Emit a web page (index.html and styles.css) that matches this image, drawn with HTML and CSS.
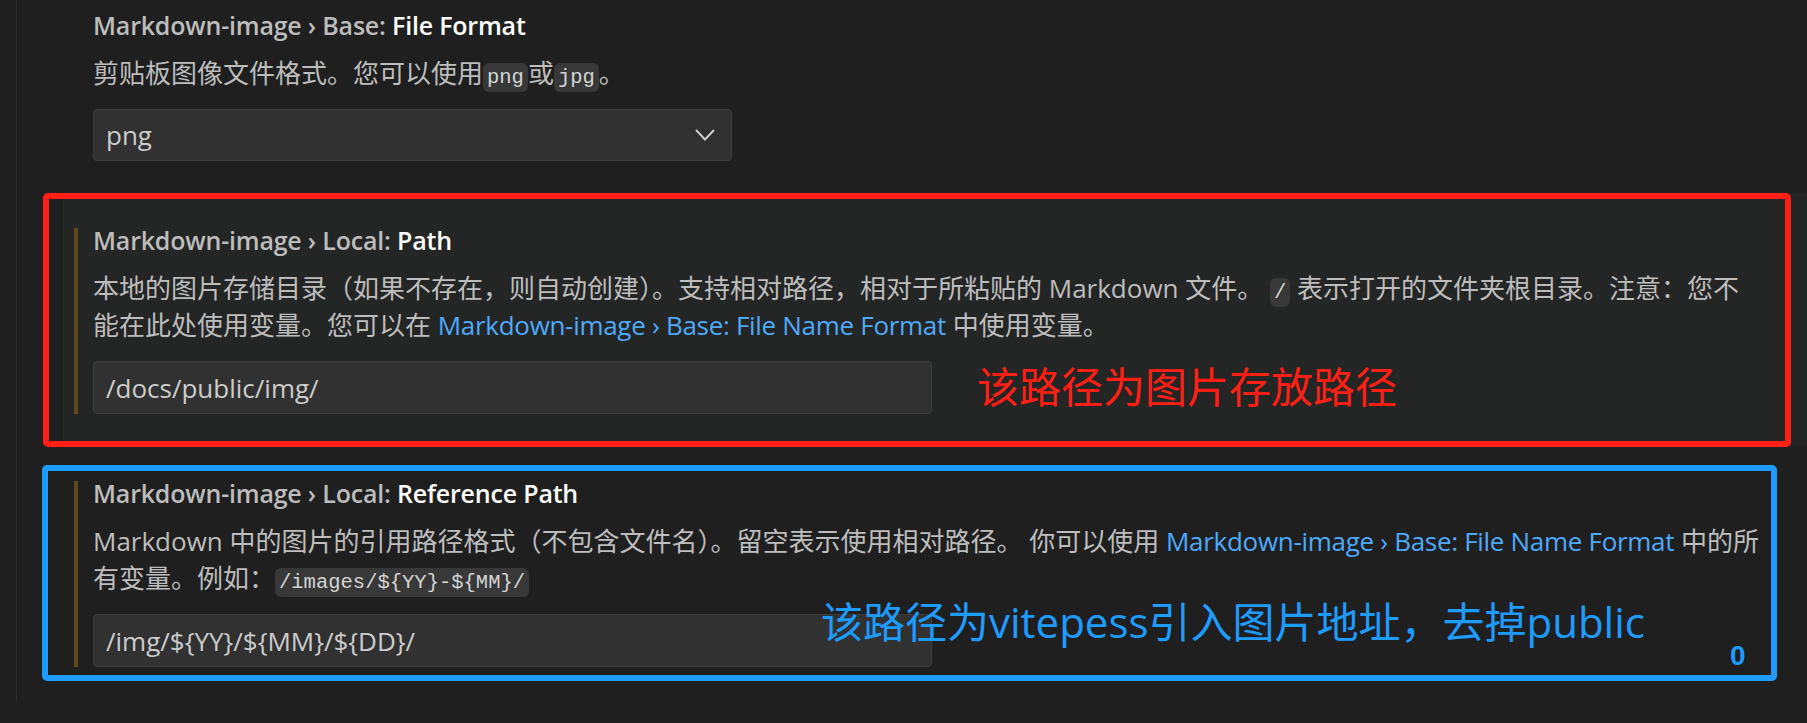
FILE: index.html
```html
<!DOCTYPE html>
<html lang="zh-CN">
<head>
<meta charset="utf-8">
<title>Settings</title>
<link rel="stylesheet" href="styles.css">
</head>
<body>
<div class="editor">
  <div class="list">
    <div class="item">
      <div class="body">
        <div class="title"><span class="cat">Markdown-image › Base: </span><span class="label">File Format</span></div>
        <div class="desc">
          <span class="ln">剪贴板图像文件格式。您可以使用<code>png</code>或<code>jpg</code>。</span>
        </div>
        <div class="select"><span>png</span><svg class="chev" width="20" height="12" viewBox="0 0 20 12"><path d="M1 1 L10 10.5 L19 1" fill="none" stroke="#cccccc" stroke-width="2"/></svg></div>
      </div>
    </div>

    <div class="item focused">
      <div class="body modified">
        <div class="title"><span class="cat">Markdown-image › Local: </span><span class="label">Path</span></div>
        <div class="desc">
          <span class="ln">本地的图片存储目录（如果不存在，则自动创建）。支持相对路径，相对于所粘贴的 Markdown 文件。 <code>/</code> 表示打开的文件夹根目录。注意：您不</span>
          <span class="ln">能在此处使用变量。您可以在 <a class="link">Markdown-image › Base: File Name Format</a> 中使用变量。</span>
        </div>
        <div class="input">/docs/public/img/</div>
      </div>
      <div class="frame frame-red"></div>
      <div class="note note-red">该路径为图片存放路径</div>
    </div>

    <div class="item">
      <div class="body modified">
        <div class="title"><span class="cat">Markdown-image › Local: </span><span class="label">Reference Path</span></div>
        <div class="desc">
          <span class="ln">Markdown 中的图片的引用路径格式（不包含文件名）。留空表示使用相对路径。 你可以使用 <a class="link">Markdown-image › Base: File Name Format</a> 中的所</span>
          <span class="ln">有变量。例如：<code>/images/${YY}-${MM}/</code></span>
        </div>
        <div class="input">/img/${YY}/${MM}/${DD}/</div>
      </div>
      <div class="frame frame-blue"></div>
      <div class="note note-blue">该路径为vitepess引入图片地址，去掉public</div>
      <div class="badge">0</div>
    </div>
  </div>
</div>
</body>
</html>
```

FILE: styles.css
```css
html, body {
  margin: 0;
  padding: 0;
  background: #1f1f1f;
  overflow: hidden;
}

body {
  font-family: "Open Sans", "Noto Sans CJK SC", sans-serif;
  color: #bdbdbd;
}

.editor {
  padding-left: 16px;
  height: 723px;
}

.list {
  border-left: 1px solid #2b2b2b;
  padding-left: 46px;
  margin-top: -22px;
  min-height: 760px;
}

.item {
  position: relative;
  padding: 35px 16px 32px 11px;
}

.item.focused {
  background: #242525;
}

.body {
  border-left: 4px solid transparent;
  padding-left: 15px;
}

.body.modified {
  border-left-color: #5f481a;
}

.title {
  font-size: 25px;
  line-height: 24px;
  font-weight: 600;
  letter-spacing: -0.2px;
  white-space: nowrap;
}

.title .cat {
  color: #bcbcbc;
}

.title .label {
  color: #ffffff;
}

.desc {
  margin-top: 18px;
  font-size: 26px;
  color: #bdbdbd;
}

.desc .ln {
  display: block;
  height: 37px;
  line-height: 37px;
  white-space: nowrap;
}

.desc code {
  font-family: "Liberation Mono", "DejaVu Sans Mono", monospace;
  font-size: 20.5px;
  background: #383838;
  color: #d4d4d4;
  padding: 3px 4px;
  border-radius: 6px;
}

.link {
  color: #4daafc;
  text-decoration: none;
  letter-spacing: -0.3px;
}

.select {
  margin-top: 17px;
  width: 639px;
  height: 52px;
  box-sizing: border-box;
  background: #313131;
  border: 1px solid #3c3c3c;
  border-radius: 4px;
  display: flex;
  align-items: center;
  justify-content: space-between;
  padding: 0 16px 0 12px;
  font-size: 26px;
  color: #cccccc;
}

.chev {
  display: block;
}

.input {
  margin-top: 17px;
  width: 839px;
  height: 53px;
  box-sizing: border-box;
  background: #313131;
  border: 1px solid #3c3c3c;
  border-radius: 4px;
  display: flex;
  align-items: center;
  padding-left: 12px;
  font-size: 26px;
  color: #cccccc;
}

.frame {
  position: absolute;
  border: 6px solid;
  border-radius: 5px;
  pointer-events: none;
}

.frame-red {
  border-color: #ff1f14;
  top: 0;
  left: -20px;
  right: 16px;
  bottom: -1px;
}

.frame-blue {
  border-color: #1e9bff;
  top: 19px;
  left: -21px;
  right: 30px;
  bottom: 18px;
}

.note {
  position: absolute;
  font-family: "Open Sans", "Noto Sans CJK SC", sans-serif;
  font-size: 42px;
  line-height: 42px;
  white-space: nowrap;
}

.note-red {
  color: #ff1f14;
  left: 914px;
  top: 173px;
}

.note-blue {
  color: #1e9bff;
  left: 758px;
  top: 155px;
}

.badge {
  position: absolute;
  left: 1667px;
  top: 196px;
  font-family: "Liberation Sans", sans-serif;
  font-weight: 700;
  font-size: 28px;
  line-height: 28px;
  color: #1e9bff;
}
```
